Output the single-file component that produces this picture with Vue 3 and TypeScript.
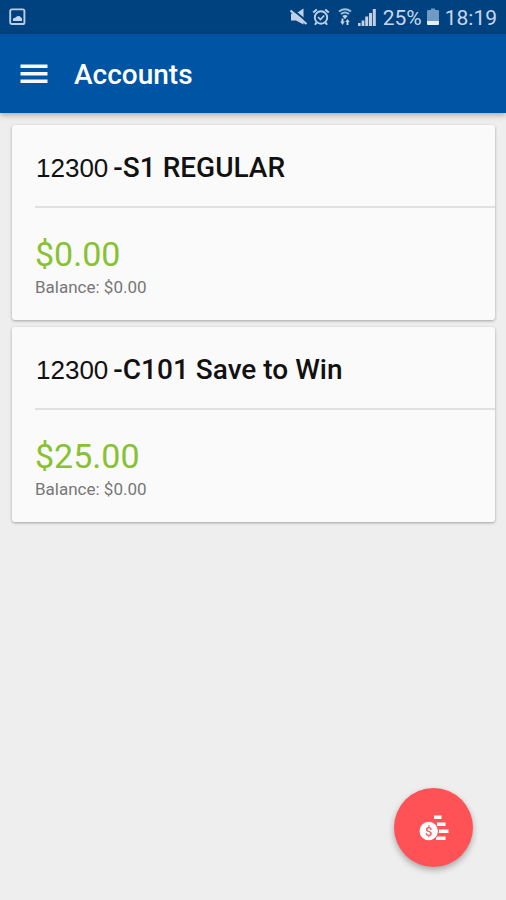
<script setup lang="ts">
interface Account {
  id: string
  number: string
  name: string
  available: string
  balance: string
}

const accounts: Account[] = [
  { id: 's1', number: '12300', name: '-S1 REGULAR', available: '$0.00', balance: '$0.00' },
  { id: 'c101', number: '12300', name: '-C101 Save to Win', available: '$25.00', balance: '$0.00' },
]
</script>

<template>
  <div class="screen">
    <div class="status">
      <svg class="picture" width="18" height="18" viewBox="0 0 18 18" aria-hidden="true">
        <rect x="1.2" y="1.4" width="14.2" height="14.6" rx="1.6" fill="none" stroke="#b9cde6" stroke-width="1.9" />
        <path d="M4 13V10.5L6.5 9.5 8 8.2 10.5 8 13 10.5V13Z" fill="#c5d6eb" />
      </svg>
      <div class="indicators">
        <svg width="18" height="18" viewBox="0 0 18 18" aria-hidden="true">
          <path d="M1 5.5H6L13.5 0.5V16.5L6 12.5H1Z" fill="#c0d1e6" />
          <path d="M2 1L17 13.5" stroke="#00427f" stroke-width="2" />
          <path d="M0.5 2.5L16.5 16" stroke="#c0d1e6" stroke-width="2.2" />
        </svg>
        <svg class="alarm" width="18" height="18" viewBox="0 0 18 18" fill="none" stroke="#c0d1e6" aria-hidden="true">
          <circle cx="9" cy="9.5" r="6.2" stroke-width="1.9" />
          <path d="M1.2 4.5L4.8 1.4M16.8 4.5L13.2 1.4M4.5 14.5L3 16.8M13.5 14.5L15 16.8" stroke-width="2" />
          <path d="M6 9L8.4 11.5 12.2 7.5" stroke-width="1.6" />
        </svg>
        <svg class="wifi" width="14" height="18" viewBox="0 0 14 18" fill="none" stroke="#9fc0d8" aria-hidden="true">
          <path d="M1 3.5Q7 -0.8 13 3.5M3 6Q7 3 11 6" stroke-width="2" />
          <path d="M4.4 8Q7 6 9.6 8L7 11.2Z" fill="#c0d1e6" stroke="none" />
          <path d="M4.5 10.5V14.5M9.5 17V13" stroke="#d5e2ef" stroke-width="1.8" />
          <path d="M2.2 13.5H6.8L4.5 17ZM7.2 14H11.8L9.5 11Z" fill="#c0d1e6" stroke="none" />
        </svg>
        <svg class="signal" width="18" height="18" viewBox="0 0 18 18" fill="#c0d1e6" aria-hidden="true">
          <path d="M0 15H2.6V18H0ZM3.6 12.5H6.4V18H3.6ZM7.2 8.5H10.2V18H7.2ZM11 5H14V18H11ZM14.8 1H17.8V18H14.8Z" />
        </svg>
        <span class="percent">25%</span>
        <svg class="battery" width="12" height="18" viewBox="0 0 12 18" aria-hidden="true">
          <path d="M1 2H4V0.5H8V2H11Q12 2 12 3V13H0V3Q0 2 1 2Z" fill="#6f9ac4" />
          <path d="M0 13H12V16Q12 17 11 17H1Q0 17 0 16Z" fill="#e6eef7" />
        </svg>
        <span class="clock">18:19</span>
      </div>
    </div>

    <header class="bar">
      <button class="menu" type="button" aria-label="Open menu">
        <svg width="28" height="20" viewBox="0 0 28 20" fill="#f4f7fc" aria-hidden="true">
          <path d="M0.5 0.5H27.5V4H0.5ZM0.5 8H27.5V11.5H0.5ZM0.5 15.5H27.5V19H0.5Z" />
        </svg>
      </button>
      <h1>Accounts</h1>
    </header>

    <main class="list">
      <article v-for="account in accounts" :key="account.id" class="card">
        <h2><span class="number">{{ account.number }}</span><span>{{ account.name }}</span></h2>
        <div class="amounts">
          <p class="available">{{ account.available }}</p>
          <p class="balance">Balance: {{ account.balance }}</p>
        </div>
      </article>
    </main>

    <button class="fab" type="button" aria-label="Move money">
      <svg width="30" height="26" viewBox="0 0 30 26" aria-hidden="true">
        <path d="M15 0.5H22.5V4H15ZM18 7.5H26.5V11H18ZM19 14.5H29.5V18H19ZM17 21.5H26.5V25H17Z" fill="#fff" />
        <circle cx="9.7" cy="16" r="10.3" fill="#ff5257" />
        <circle cx="9.7" cy="16" r="9.2" fill="#fff" />
        <text x="9.7" y="20.5" text-anchor="middle" class="coin">$</text>
      </svg>
    </button>
  </div>
</template>

<style>
body {
  margin: 0;
  background: #eee;
}
</style>

<style scoped>
.screen {
  min-height: 100vh;
  background: #eee;
  font-family: Roboto, "Liberation Sans", sans-serif;
}

.status {
  display: flex;
  align-items: center;
  justify-content: space-between;
  height: 34px;
  padding: 0 9px;
  background: #00427f;
  color: #c8d7ea;
  font-size: 21px;
  line-height: 34px;
}

.status svg {
  display: block;
}

.indicators {
  display: flex;
  align-items: center;
}

.alarm {
  margin-left: 4px;
}

.wifi {
  margin-left: 8px;
}

.signal {
  margin-left: 6px;
}

.percent {
  margin: 2px 5px 0 7px;
}

.clock {
  margin: 2px 0 0 6px;
}

.bar {
  position: relative;
  display: flex;
  align-items: center;
  height: 79px;
  padding: 0 20px;
  background: #0054a4;
  box-shadow: 0 2px 6px rgba(0, 0, 0, 0.3);
}

.menu {
  display: flex;
  padding: 0;
  border: 0;
  background: none;
  cursor: pointer;
}

h1 {
  margin: 2px 0 0 26px;
  color: #fff;
  font-size: 28px;
  font-weight: 500;
  line-height: 32px;
}

.list {
  display: grid;
  gap: 7px;
  padding: 12px 11px 12px 12px;
}

.card {
  padding-left: 23px;
  border-radius: 3px;
  background: #fafafa;
  box-shadow: 0 1px 3px rgba(0, 0, 0, 0.32);
}

h2 {
  display: flex;
  align-items: baseline;
  gap: 5px;
  margin: 0;
  padding: 27px 16px 22px 1px;
  color: #111;
  font-size: 28px;
  font-weight: 500;
  line-height: 32px;
}

.number {
  font-family: "Liberation Sans", Arial, sans-serif;
  font-size: 26px;
  font-weight: 400;
}

.amounts {
  padding: 26px 0 22px;
  border-top: 2px solid #e0e0e0;
}

p {
  margin: 0;
}

.available {
  color: #87c232;
  font-size: 34px;
  line-height: 40px;
}

.balance {
  margin-top: 2px;
  color: #777;
  font-size: 17px;
  line-height: 22px;
}

.fab {
  position: fixed;
  right: 33px;
  bottom: 33px;
  display: flex;
  align-items: center;
  justify-content: center;
  width: 79px;
  height: 79px;
  padding: 0;
  border: 0;
  border-radius: 50%;
  background: #ff5257;
  box-shadow: 0 3px 6px rgba(0, 0, 0, 0.3);
  cursor: pointer;
}

.coin {
  fill: #ff5257;
  font-family: Roboto, sans-serif;
  font-size: 13px;
  font-weight: 500;
}
</style>
